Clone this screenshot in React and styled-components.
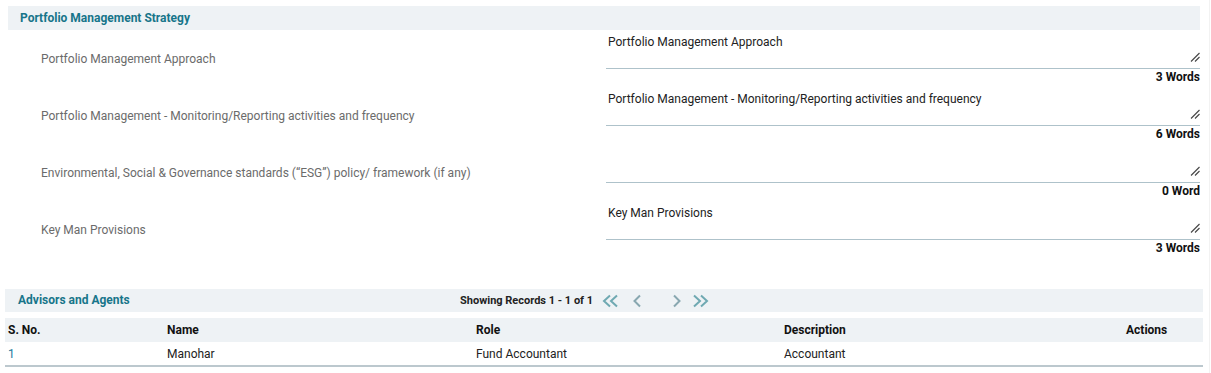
import React from "react";
import styled, { createGlobalStyle } from "styled-components";

const GlobalStyle = createGlobalStyle`
  body {
    margin: 0;
    background: #fff;
    font-family: Roboto, "Liberation Sans", Arial, sans-serif;
    color: #222;
  }
`;

const strategyRows = [
  { label: "Portfolio Management Approach", value: "Portfolio Management Approach", count: "3 Words" },
  {
    label: "Portfolio Management - Monitoring/Reporting activities and frequency",
    value: "Portfolio Management - Monitoring/Reporting activities and frequency",
    count: "6 Words",
  },
  {
    label: "Environmental, Social & Governance standards (\u201cESG\u201d) policy/ framework (if any)",
    value: "",
    count: "0 Word",
  },
  { label: "Key Man Provisions", value: "Key Man Provisions", count: "3 Words" },
];

const advisors = [{ id: 1, name: "Manohar", role: "Fund Accountant", description: "Accountant" }];

const ResizeGrip = () => (
  <Grip width="10" height="10" viewBox="0 0 10 10">
    <path d="M1 9.5 L9.5 1 M5 9.5 L9.5 5" stroke="#4a4a4a" strokeWidth="1.2" fill="none" />
  </Grip>
);

const Chevron = ({ dir, double, gap = 12 }) => {
  const color = double ? "#6fa9b2" : "#88a7b0";
  const w = double ? 18 : 10;
  return (
    <PagerIcon width={w} height="14" viewBox={`0 0 ${w} 14`} $gap={gap}>
      <g transform={dir === "right" ? `scale(-1,1) translate(-${w},0)` : undefined}>
        {double ? (
          <>
            <path d="M8 1.5 L2 7 L8 12.5" stroke={color} strokeWidth="2" fill="none" />
            <path d="M15 1.5 L9 7 L15 12.5" stroke={color} strokeWidth="2" fill="none" />
          </>
        ) : (
          <path d="M8 1.5 L2.5 7 L8 12.5" stroke={color} strokeWidth="2" fill="none" />
        )}
      </g>
    </PagerIcon>
  );
};

const App = () => {
  return (
    <Page>
      <GlobalStyle />
      <Section $inset={8}>
        <SectionBar $h={24}>
          <SectionTitle $pad={12}>Portfolio Management Strategy</SectionTitle>
        </SectionBar>
        {strategyRows.map((row) => (
          <FieldRow key={row.label}>
            <FieldLabel>{row.label}</FieldLabel>
            <FieldInput>
              <TextBox>
                {row.value}
                <ResizeGrip />
              </TextBox>
              <WordCount>{row.count}</WordCount>
            </FieldInput>
          </FieldRow>
        ))}
      </Section>

      <Section $inset={5} $top={31}>
        <SectionBar $h={23}>
          <SectionTitle $pad={13} $width={455}>
            Advisors and Agents
          </SectionTitle>
          <Pager>
            <PagerText>Showing Records 1 - 1 of 1</PagerText>
            <Chevron dir="left" double />
            <Chevron dir="left" />
            <PagerGap />
            <Chevron dir="right" gap={9} />
            <Chevron dir="right" double />
          </Pager>
        </SectionBar>
        <Table>
          <colgroup>
            <col style={{ width: 159 }} />
            <col style={{ width: 309 }} />
            <col style={{ width: 308 }} />
            <col />
            <col style={{ width: 80 }} />
          </colgroup>
          <thead>
            <tr>
              <HeadCell>S. No.</HeadCell>
              <HeadCell>Name</HeadCell>
              <HeadCell>Role</HeadCell>
              <HeadCell>Description</HeadCell>
              <HeadCell>Actions</HeadCell>
            </tr>
          </thead>
          <tbody>
            {advisors.map((a) => (
              <tr key={a.id}>
                <BodyCell $link>{a.id}</BodyCell>
                <BodyCell>{a.name}</BodyCell>
                <BodyCell>{a.role}</BodyCell>
                <BodyCell>{a.description}</BodyCell>
                <BodyCell />
              </tr>
            ))}
          </tbody>
        </Table>
      </Section>
    </Page>
  );
};

export default App;

const Page = styled.div`
  width: 1210px;
  min-height: 373px;
  padding-top: 6px;
  box-sizing: border-box;
  border-right: 1px solid #f2f2f2;
`;

const Section = styled.section`
  margin: ${(p) => p.$top || 0}px ${(p) => p.$inset + 1}px 0 ${(p) => p.$inset}px;
`;

const SectionBar = styled.div`
  display: flex;
  align-items: center;
  height: ${(p) => p.$h}px;
  background: #eef2f5;
`;

const SectionTitle = styled.div`
  flex: ${(p) => (p.$width ? `0 0 ${p.$width}px` : "1")};
  box-sizing: border-box;
  padding-left: ${(p) => p.$pad}px;
  padding-bottom: 1px;
  font-size: 12px;
  font-weight: 700;
  color: #17758a;
`;

const FieldRow = styled.div`
  display: grid;
  grid-template-columns: 598px 1fr;
  align-items: center;
  height: 57px;
`;

const FieldLabel = styled.div`
  padding-left: 33px;
  font-size: 12px;
  color: #6b6b6b;
`;

const FieldInput = styled.div`
  display: flex;
  flex-direction: column;
  align-self: start;
`;

const TextBox = styled.div`
  position: relative;
  height: 39px;
  box-sizing: border-box;
  padding: 5px 2px 0;
  font-size: 12px;
  line-height: 14px;
  color: #222;
  border-bottom: 1px solid #aec2ca;
`;

const Grip = styled.svg`
  position: absolute;
  right: 0;
  bottom: 6px;
`;

const WordCount = styled.div`
  margin-top: 1px;
  text-align: right;
  font-size: 12px;
  font-weight: 700;
  line-height: 14px;
  color: #111;
`;

const Pager = styled.div`
  display: flex;
  align-items: center;
`;

const PagerText = styled.span`
  font-size: 11px;
  font-weight: 700;
  color: #222;
  margin-right: 9px;
`;

const PagerIcon = styled.svg`
  display: block;
  margin-right: ${(p) => p.$gap}px;
`;

const PagerGap = styled.span`
  width: 18px;
`;

const Table = styled.table`
  width: 100%;
  margin-top: 6px;
  border-collapse: collapse;
  table-layout: fixed;
  font-size: 12px;
`;

const HeadCell = styled.th`
  height: 24px;
  padding: 0 3px;
  background: #eef2f5;
  text-align: left;
  font-weight: 700;
  color: #111;
`;

const BodyCell = styled.td`
  height: 23px;
  padding: 0 3px;
  border-bottom: 2px solid #bcc8ce;
  color: ${(p) => (p.$link ? "#1b7a9c" : "#222")};
`;
